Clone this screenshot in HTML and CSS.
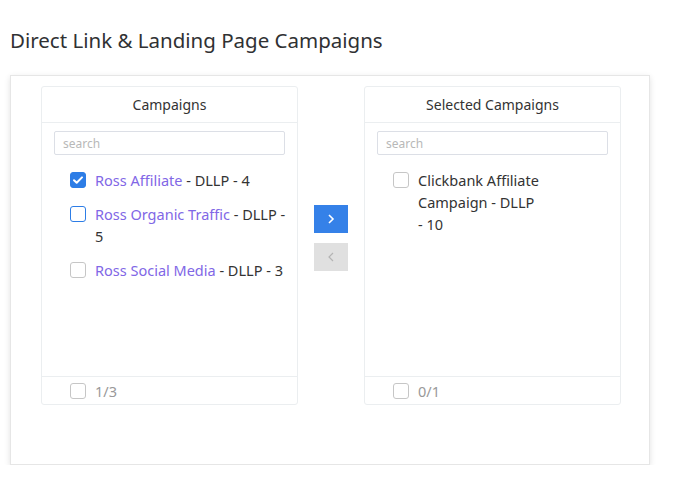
FILE: index.html
```html
<!DOCTYPE html>
<html lang="en">
<head>
    <meta charset="UTF-8">
    <meta name="viewport" content="width=device-width, initial-scale=1.0">
    <title>Direct Link &amp; Landing Page Campaigns</title>
    <link rel="stylesheet" href="styles.css">
</head>
<body>
    <h1 class="page-title">Direct Link &amp; Landing Page Campaigns</h1>

    <div class="card">
        <div class="transfer">
            <div class="transfer-list">
                <div class="transfer-header">Campaigns</div>
                <div class="transfer-search">
                    <input type="text" placeholder="search">
                </div>
                <ul class="transfer-items">
                    <li class="transfer-item">
                        <span class="check checked">
                            <svg viewBox="0 0 16 16" width="16" height="16"><path d="M4 8.2l2.7 2.6L12 5.4" fill="none" stroke="#fff" stroke-width="2" stroke-linecap="round" stroke-linejoin="round"/></svg>
                        </span>
                        <span class="item-text"><span class="name">Ross Affiliate</span> - DLLP - 4</span>
                    </li>
                    <li class="transfer-item">
                        <span class="check hover"></span>
                        <span class="item-text"><span class="name">Ross Organic Traffic</span> - DLLP - 5</span>
                    </li>
                    <li class="transfer-item">
                        <span class="check"></span>
                        <span class="item-text"><span class="name">Ross Social Media</span> - DLLP - 3</span>
                    </li>
                </ul>
                <div class="transfer-footer">
                    <span class="check"></span>
                    <span class="count">1/3</span>
                </div>
            </div>

            <div class="transfer-buttons">
                <button class="btn btn-primary">
                    <svg viewBox="0 0 12 12" width="12" height="12"><path d="M4 2l4 4-4 4" fill="none" stroke="#fff" stroke-width="1.6"/></svg>
                </button>
                <button class="btn btn-disabled">
                    <svg viewBox="0 0 12 12" width="12" height="12"><path d="M8 2L4 6l4 4" fill="none" stroke="#b4b4b4" stroke-width="1.2"/></svg>
                </button>
            </div>

            <div class="transfer-list">
                <div class="transfer-header">Selected Campaigns</div>
                <div class="transfer-search">
                    <input type="text" placeholder="search">
                </div>
                <ul class="transfer-items">
                    <li class="transfer-item">
                        <span class="check"></span>
                        <span class="item-text narrow">Clickbank Affiliate Campaign - DLLP - 10</span>
                    </li>
                </ul>
                <div class="transfer-footer">
                    <span class="check"></span>
                    <span class="count">0/1</span>
                </div>
            </div>
        </div>
    </div>
</body>
</html>
```

FILE: styles.css
```css
body {
    margin: 0;
    padding: 0 10px;
    background: #fff;
    color: #333;
    font-family: "Noto Sans", "Open Sans", sans-serif;
    font-size: 14px;
}

.page-title {
    margin: 0;
    padding: 26px 0 21px;
    font-size: 20.5px;
    font-weight: 400;
    line-height: 28px;
    color: #303133;
}

.card {
    width: 640px;
    height: 390px;
    box-sizing: border-box;
    padding: 10px 28px 0 30px;
    border: 1px solid #e6e6e6;
    box-shadow: 0 2px 6px rgba(0, 0, 0, 0.12);
}

.transfer {
    display: flex;
}

.transfer-list {
    flex: none;
    width: 257px;
    height: 319px;
    box-sizing: border-box;
    display: flex;
    flex-direction: column;
    border: 1px solid #ebeef0;
    border-radius: 3px;
}

.transfer-header {
    height: 35px;
    line-height: 35px;
    text-align: center;
    border-bottom: 1px solid #ebeef0;
}

.transfer-search {
    padding: 8px 12px 0;
}

.transfer-search input {
    width: 100%;
    height: 24px;
    box-sizing: border-box;
    padding: 0 8px;
    border: 1px solid #dcdfe6;
    border-radius: 2px;
    font-family: inherit;
    font-size: 12px;
    color: #333;
    outline: none;
}

.transfer-search input::placeholder {
    color: #b8b8b8;
}

.transfer-items {
    flex: 1;
    margin: 0;
    padding: 14px 10px 0 28px;
    list-style: none;
    font-size: 14.5px;
}

.transfer-item {
    display: flex;
    align-items: flex-start;
    gap: 9px;
    line-height: 22px;
    margin-bottom: 12px;
}

.item-text {
    flex: 1;
}

.item-text.narrow {
    flex: none;
    width: 122px;
}

.name {
    color: #8167e6;
}

.check {
    flex: none;
    width: 16px;
    height: 16px;
    margin-top: 3px;
    box-sizing: border-box;
    border: 1px solid #c6c6c6;
    border-radius: 3px;
    background: #fff;
}

.check svg {
    display: block;
    margin: -1px;
}

.check.checked {
    background: #2d7de6;
    border-color: #2d7de6;
}

.check.hover {
    border-color: #2d7de6;
}

.transfer-footer {
    height: 27px;
    display: flex;
    align-items: center;
    gap: 9px;
    padding-left: 28px;
    border-top: 1px solid #ebeef0;
    font-size: 14.5px;
}

.transfer-footer .check {
    margin-top: 0;
}

.count {
    color: #999;
}

.transfer-buttons {
    flex: none;
    width: 66px;
    display: flex;
    flex-direction: column;
    align-items: center;
    justify-content: center;
    gap: 10px;
    padding-bottom: 15px;
}

.btn {
    width: 34px;
    height: 28px;
    padding: 0;
    border: none;
    border-radius: 0;
    display: flex;
    align-items: center;
    justify-content: center;
}

.btn-primary {
    background: #3581e8;
}

.btn-disabled {
    background: #e0e0e0;
}
```
